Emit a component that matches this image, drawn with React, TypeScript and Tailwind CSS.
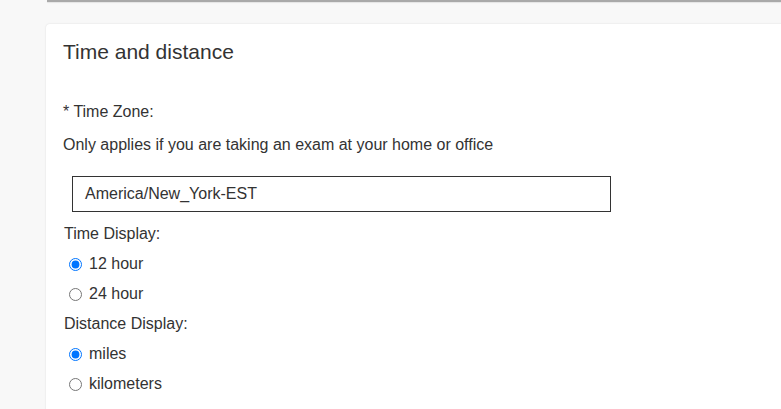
import React from "react";

function RadioRow({ label, checked, name }: { label: string; checked: boolean; name: string }) {
  return (
    <label className="flex h-[30px] items-center">
      <input
        type="radio"
        name={name}
        defaultChecked={checked}
        className="m-0 ml-[5px] h-[13px] w-[13px]"
      />
      <span className="ml-[7px]">{label}</span>
    </label>
  );
}

export default function App() {
  return (
    <div
      className="h-[409px] w-[781px] overflow-hidden bg-[#f8f8f8] text-[#333333]"
      style={{ fontFamily: '"Liberation Sans", Arial, sans-serif' }}
    >
      <div className="ml-[47px] h-[2px] bg-[#a9a9a9] shadow-[0_1px_1px_rgba(0,0,0,0.08)]" />
      <div className="ml-[46px] mt-[22px] h-[420px] w-[800px] rounded-[4px] bg-white pl-[17px] pt-[15px] shadow-[0_0_2px_rgba(0,0,0,0.12)]">
        <h2 className="h-[25px] text-[21px] leading-[25px] font-normal">Time and distance</h2>
        <div className="mt-[36px] h-[24px] text-[16px] leading-[24px]">* Time Zone:</div>
        <div className="mt-[9px] h-[24px] text-[16px] leading-[24px]">
          Only applies if you are taking an exam at your home or office
        </div>
        <div className="ml-[9px] mt-[19px] flex h-[36px] w-[539px] items-center border border-[#333333] pl-[12px] text-[16px]">
          America/New_York-EST
        </div>
        <div className="mt-[7px] text-[16px] ml-[1px]">
          <div className="flex h-[30px] items-center">Time Display:</div>
          <RadioRow name="time" label="12 hour" checked />
          <RadioRow name="time" label="24 hour" checked={false} />
          <div className="flex h-[30px] items-center">Distance Display:</div>
          <RadioRow name="dist" label="miles" checked />
          <RadioRow name="dist" label="kilometers" checked={false} />
        </div>
      </div>
    </div>
  );
}
